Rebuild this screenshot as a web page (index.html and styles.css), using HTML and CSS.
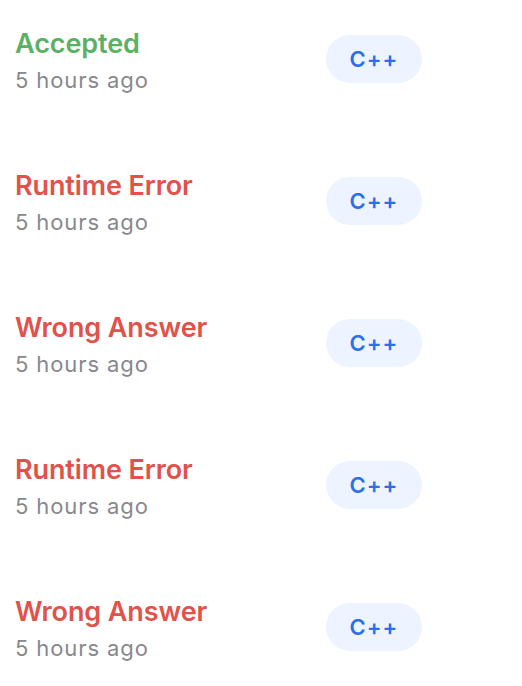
FILE: index.html
```html
<!DOCTYPE html>
<html>
<head>
<meta charset="utf-8">
<link rel="stylesheet" href="styles.css">
</head>
<body>
<ul class="list">
  <li class="row">
    <div class="info"><div class="status ok">Accepted</div><div class="time">5 hours ago</div></div>
    <span class="lang">C++</span>
  </li>
  <li class="row">
    <div class="info"><div class="status err">Runtime Error</div><div class="time">5 hours ago</div></div>
    <span class="lang">C++</span>
  </li>
  <li class="row">
    <div class="info"><div class="status err">Wrong Answer</div><div class="time">5 hours ago</div></div>
    <span class="lang">C++</span>
  </li>
  <li class="row">
    <div class="info"><div class="status err">Runtime Error</div><div class="time">5 hours ago</div></div>
    <span class="lang">C++</span>
  </li>
  <li class="row">
    <div class="info"><div class="status err">Wrong Answer</div><div class="time">5 hours ago</div></div>
    <span class="lang">C++</span>
  </li>
</ul>
</body>
</html>
```
FILE: styles.css
```css
html, body {
  margin: 0;
  padding: 0;
  background: #ffffff;
  font-family: Inter, "Noto Sans", sans-serif;
}
.list {
  list-style: none;
  margin: 0;
  padding: 0;
}
.row {
  box-sizing: border-box;
  height: 142px;
  padding: 26px 0 0 15px;
  display: flex;
  align-items: flex-start;
}
.info {
  width: 311px;
}
.status {
  font-size: 27px;
  line-height: 36px;
  font-weight: 600;
  letter-spacing: -0.1px;
}
.ok { color: #5bb065; }
.err { color: #e0524a; }
.time {
  font-size: 22px;
  line-height: 36px;
  color: #88888c;
  letter-spacing: 0.9px;
}
.lang {
  margin-top: 9px;
  width: 96px;
  height: 48px;
  border-radius: 24px;
  background: #eef4ff;
  color: #2c6fe6;
  font-size: 22px;
  font-weight: 600;
  letter-spacing: 1px;
  display: flex;
  align-items: center;
  justify-content: center;
}
```
